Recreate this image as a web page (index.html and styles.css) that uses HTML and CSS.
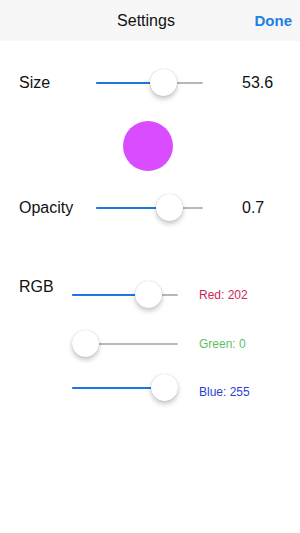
FILE: index.html
```html
<!DOCTYPE html>
<html>
<head>
<meta charset="utf-8">
<link rel="stylesheet" href="styles.css">
</head>
<body>
<div class="navbar">
  <div></div>
  <div class="title">Settings</div>
  <div class="done">Done</div>
</div>

<div class="row size-row">
  <div class="label">Size</div>
  <div class="slider wide" style="--p:0.669"><div class="fill"></div><div class="thumb"></div></div>
  <div class="value">53.6</div>
</div>

<div class="preview"><div class="dot"></div></div>

<div class="row">
  <div class="label">Opacity</div>
  <div class="slider wide" style="--p:0.756"><div class="fill"></div><div class="thumb"></div></div>
  <div class="value">0.7</div>
</div>

<div class="rgb">
  <div class="rgb-label">RGB</div>
  <div class="rgb-rows">
    <div class="rgb-row">
      <div class="slider narrow" style="--p:0.8"><div class="fill"></div><div class="thumb"></div></div>
      <div class="chan red">Red: 202</div>
    </div>
    <div class="rgb-row green-row">
      <div class="slider narrow" style="--p:0"><div class="fill"></div><div class="thumb"></div></div>
      <div class="chan green">Green: 0</div>
    </div>
    <div class="rgb-row blue-row">
      <div class="slider narrow" style="--p:1"><div class="fill"></div><div class="thumb"></div></div>
      <div class="chan blue">Blue: 255</div>
    </div>
  </div>
</div>
</body>
</html>
```
FILE: styles.css
```css
html, body {
  margin: 0;
  padding: 0;
  background: #fff;
}
body {
  width: 300px;
  height: 533px;
  font-family: "Liberation Sans", Arial, sans-serif;
  color: #111;
}
.navbar {
  height: 41px;
  background: #f7f7f7;
  display: grid;
  grid-template-columns: 1fr auto 1fr;
  align-items: center;
  padding-right: 8px;
  box-sizing: border-box;
}
.title {
  font-size: 16px;
  line-height: 18px;
}
.done {
  justify-self: end;
  font-size: 15px;
  font-weight: bold;
  color: #1e7fe4;
  line-height: 18px;
}
.row {
  display: flex;
  align-items: center;
  height: 30px;
  padding-left: 19px;
}
.size-row {
  margin-top: 27px;
}
.label {
  width: 77px;
  font-size: 16px;
  line-height: 18px;
  flex: none;
}
.value {
  margin-left: 39px;
  font-size: 16px;
  line-height: 18px;
}
.slider {
  position: relative;
  height: 28px;
  flex: none;
}
.slider::before {
  content: "";
  position: absolute;
  left: 0;
  right: 0;
  top: 13px;
  height: 2px;
  background: #b8b8b8;
  border-radius: 1px;
}
.slider .fill {
  position: absolute;
  left: 0;
  top: 13px;
  height: 2px;
  border-radius: 1px;
  background: #1a78e2;
  width: calc((100% - 27px) * var(--p) + 13px);
}
.slider .thumb {
  position: absolute;
  top: 0;
  width: 27px;
  height: 27px;
  border-radius: 50%;
  background: #fff;
  left: calc((100% - 27px) * var(--p));
  box-shadow: 0 3px 5px rgba(0, 0, 0, 0.22), 0 0 1px rgba(0, 0, 0, 0.25);
}
.wide {
  width: 107px;
}
.narrow {
  width: 106px;
}
.preview {
  display: flex;
  justify-content: center;
  padding-right: 4px;
  margin: 23px 0 22px;
}
.dot {
  width: 50px;
  height: 50px;
  border-radius: 50%;
  background: rgba(202, 0, 255, 0.7);
}
.rgb {
  display: flex;
  padding-left: 19px;
  margin-top: 57px;
}
.rgb-label {
  width: 53px;
  flex: none;
  font-size: 16px;
  line-height: 18px;
  margin-top: -2px;
}
.rgb-rows {
  display: flex;
  flex-direction: column;
}
.rgb-row {
  display: flex;
  align-items: center;
  height: 30px;
}
.green-row {
  margin-top: 19px;
}
.blue-row {
  margin-top: 14px;
}
.chan {
  margin-left: 21px;
  font-size: 12px;
  line-height: 14px;
}
.red {
  color: #cc2a58;
}
.green {
  color: #5fbf5f;
}
.blue {
  color: #2a3fd4;
  margin-top: 8px;
}
```
